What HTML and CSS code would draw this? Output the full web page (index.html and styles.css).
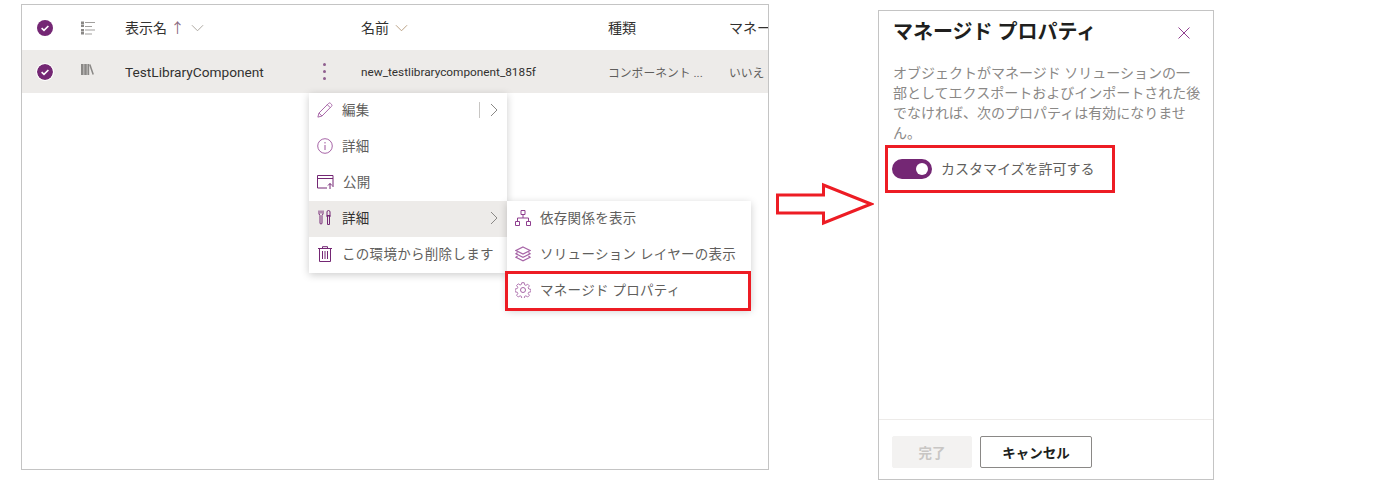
FILE: index.html
```html
<!DOCTYPE html>
<html lang="ja">
<head>
  <meta charset="UTF-8">
  <title>マネージド プロパティ</title>
  <link rel="stylesheet" href="styles.css">
</head>
<body>
  <div class="page">
    <div class="list-panel">
      <div class="row head-row">
        <svg class="check" viewBox="0 0 16 16"><circle cx="8" cy="8" r="8" fill="#742774"/><path d="M4.6 8.2l2.4 2.2 4.4-4.4" fill="none" stroke="#fff" stroke-width="1.6"/></svg>
        <svg class="type-icon" viewBox="0 0 14 14"><path d="M0 .5h3v2.500H0zM0 3.500h3v2.500H0zM0 8h3v2.500H0zM0 11h3v2.500H0z" fill="#8a8886"/><path d="M4 1.500h10M4 5.500h7M4 9h10M4 13h7" stroke="#a19f9d" fill="none"/></svg>
        <div class="cell">表示名 <span class="sort">↑</span>
          <svg class="chev" viewBox="0 0 14 8"><path d="M1 1l6 6 6-6" fill="none" stroke="#a8a29a"/></svg>
        </div>
        <div class="cell"></div>
        <div class="cell">名前
          <svg class="chev" viewBox="0 0 14 8"><path d="M1 1l6 6 6-6" fill="none" stroke="#b59b7c"/></svg>
        </div>
        <div class="cell">種類</div>
        <div class="cell">マネージド</div>
      </div>
      <div class="row item-row">
        <svg class="check ringed" viewBox="0 0 16 16"><circle cx="8" cy="8" r="8" fill="#742774"/><path d="M4.6 8.2l2.4 2.2 4.4-4.4" fill="none" stroke="#fff" stroke-width="1.6"/></svg>
        <svg class="type-icon lib" viewBox="0 0 13 11"><path d="M0 0h2.600v11H0zM3.200 0h2.600v11H3.200zM6.400 0h1.800v11H6.400z" fill="#8a8886"/><path d="M8.800 .5l3.400 10" stroke="#8a8886" stroke-width="1.500" fill="none"/></svg>
        <div class="cell title">TestLibraryComponent</div>
        <div class="kebab"><i></i><i></i><i></i></div>
        <div class="cell small">new_testlibrarycomponent_8185f</div>
        <div class="cell small muted">コンポーネント ...</div>
        <div class="cell small muted">いいえ</div>
      </div>

      <div class="menu">
        <div class="menu-item">
          <svg class="menu-icon" viewBox="0 0 18 18"><path d="M1 17l1.2-4.6L13 1.6a1.6 1.6 0 0 1 2.3 0l1 1a1.6 1.6 0 0 1 0 2.3L5.6 15.8zM2.2 12.4l3.4 3.4M11.6 3l3.4 3.4" fill="none" stroke="#a765a7" stroke-width="1.1"/></svg>
          <span class="menu-text">編集</span>
          <span class="split"></span>
          <svg class="menu-chev" viewBox="0 0 8 14"><path d="M1 1l6 6-6 6" fill="none" stroke="#8a8886"/></svg>
        </div>
        <div class="menu-item">
          <svg class="menu-icon" viewBox="0 0 16 16"><circle cx="8" cy="8" r="7.3" fill="none" stroke="#a765a7"/><path d="M8 7v5M8 4v1.4" fill="none" stroke="#a765a7" stroke-width="1.1"/></svg>
          <span class="menu-text">詳細</span>
        </div>
        <div class="menu-item">
          <svg class="menu-icon wide" viewBox="0 0 17 14"><path d="M10 13H.5V.5h15.500V12M.5 3.500h15.500" fill="none" stroke="#742774"/><path d="M13 14V8.500M11 10.500l2-2 2 2" fill="none" stroke="#742774"/></svg>
          <span class="menu-text">公開</span>
        </div>
        <div class="menu-item active">
          <svg class="menu-icon" viewBox="0 0 16 16"><path d="M4 .5v3M2 .5v3.500l1 1.500v7.500a1 1 0 0 0 2 0V5.500l1-1.500V.5" fill="none" stroke="#742774"/><path d="M11.500.5a1.500 1.500 0 0 0-1.500 1.500v3.500h3V2a1.500 1.500 0 0 0-1.500-1.500zM9 6h5M10.500 6v8.500h2V6" fill="none" stroke="#742774"/></svg>
          <span class="menu-text dark">詳細</span>
          <svg class="menu-chev" viewBox="0 0 8 14"><path d="M1 1l6 6-6 6" fill="none" stroke="#8a8886"/></svg>
          <div class="submenu">
            <div class="menu-item">
              <svg class="menu-icon" viewBox="0 0 16 16"><path d="M6 .5h4v4H6zM.5 11.500h4v4h-4zM11.500 11.500h4v4h-4zM8 4.500v3.500M2.500 11.500V8h11v3.500" fill="none" stroke="#8f3f8f"/></svg>
              <span class="menu-text">依存関係を表示</span>
            </div>
            <div class="menu-item">
              <svg class="menu-icon" viewBox="0 0 16 16"><path d="M8 1l7 3.500-7 3.500-7-3.500zM2.500 6.500L1 7.800l7 3.500 7-3.500-1.500-1.300M2.500 10L1 11.300l7 3.500 7-3.500L13.500 10" fill="none" stroke="#a765a7" stroke-width="1.200"/></svg>
              <span class="menu-text">ソリューション レイヤーの表示</span>
            </div>
            <div class="menu-item callout">
              <svg class="menu-icon" viewBox="0 0 16 16"><circle cx="8" cy="8" r="2.500" fill="none" stroke="#a765a7"/><path d="M6.800.7h2.400l.4 2.100 1.300.6 1.800-1.200 1.700 1.700-1.200 1.800.6 1.300 2.100.4v2.400l-2.100.4-.6 1.300 1.200 1.800-1.700 1.700-1.800-1.200-1.300.6-.4 2.100H6.800l-.4-2.100-1.300-.6-1.800 1.200-1.700-1.700 1.200-1.800-.6-1.300-2.100-.4V7l2.100-.4.600-1.300-1.200-1.800 1.700-1.700 1.800 1.200 1.300-.6z" fill="none" stroke="#a765a7" stroke-width=".9"/></svg>
              <span class="menu-text">マネージド プロパティ</span>
            </div>
          </div>
        </div>
        <div class="menu-item">
          <svg class="menu-icon" viewBox="0 0 16 16"><path d="M1 2.500h14M5.500 2.500V.7h5v1.800M2.500 2.500v13h11v-13M5.500 5v8M8 5v8M10.500 5v8" fill="none" stroke="#742774"/></svg>
          <span class="menu-text">この環境から削除します</span>
        </div>
      </div>
    </div>

    <svg class="flow-arrow" viewBox="0 0 98 44"><path d="M1.500 13H47.500V3L95 22 47.500 41V31H1.500z" fill="#fff" stroke="#ed1c24" stroke-width="3"/></svg>

    <div class="side-panel">
      <div class="side-body">
        <div class="side-head">
          <h2>マネージド プロパティ</h2>
          <svg class="close" viewBox="0 0 12 12"><path d="M.5.500l11 11M11.500.500l-11 11" fill="none" stroke="#8f3f8f"/></svg>
        </div>
        <p class="desc">オブジェクトがマネージド ソリューションの一<br>部としてエクスポートおよびインポートされた後<br>でなければ、次のプロパティは有効になりませ<br>ん。</p>
        <div class="toggle-row">
          <span class="toggle"><i></i></span>
          <span class="toggle-label">カスタマイズを許可する</span>
        </div>
      </div>
      <div class="side-foot">
        <button class="btn btn-off">完了</button>
        <button class="btn">キャンセル</button>
      </div>
    </div>
  </div>
</body>
</html>
```

FILE: styles.css
```css
* {
  box-sizing: border-box;
}
body {
  margin: 0;
  background-color: #fff;
  font-family: Roboto, "Noto Sans CJK JP", sans-serif;
  color: #323130;
  overflow: hidden;
}
.page {
  display: flex;
  align-items: flex-start;
  height: 485px;
  padding: 4px 0 0 21px;
}

/* list */
.list-panel {
  position: relative;
  width: 748px;
  height: 466px;
  border: 1px solid #c4c4c4;
  overflow: hidden;
  flex: none;
}
.row {
  display: grid;
  grid-template-columns: 59px 44px 177px 59px 247px 121px 100px;
  align-items: center;
}
.head-row {
  height: 45px;
  font-size: 14px;
}
.head-row .cell {
  padding-bottom: 1px;
}
.item-row {
  height: 43px;
  background-color: #edebe9;
}
.check {
  width: 16px;
  height: 16px;
  margin-left: 15px;
}
.check.ringed {
  border-radius: 50%;
  box-shadow: 0 0 0 1px #fff;
}
.type-icon {
  width: 14px;
  height: 14px;
}
.type-icon.lib {
  width: 13px;
  height: 11px;
  margin-top: -4px;
}
.cell {
  white-space: nowrap;
  color: #323130;
}
.sort {
  color: #8a6a80;
}
.chev {
  width: 13px;
  height: 8px;
  margin-left: 3px;
  vertical-align: 1px;
}
.title {
  font-size: 13.700px;
}
.small {
  font-size: 11.800px;
}
.muted {
  color: #605e5c;
}
.kebab {
  display: flex;
  flex-direction: column;
  gap: 4px;
  width: 3px;
  margin-left: 21px;
}
.kebab i {
  width: 3px;
  height: 3px;
  border-radius: 50%;
  background-color: #8f5f8f;
}

/* menus */
.menu {
  position: absolute;
  left: 287px;
  top: 88px;
  width: 198px;
  background-color: #fff;
  box-shadow: 0 2px 8px rgba(0, 0, 0, 0.2);
}
.menu-item {
  position: relative;
  display: flex;
  align-items: center;
  height: 36px;
  padding: 0 9px 2px 8px;
  font-size: 13.500px;
  white-space: nowrap;
}
.menu-item.active {
  background-color: #edebe9;
}
.menu-icon {
  width: 16px;
  height: 16px;
  flex: none;
}
.menu-icon.wide {
  width: 17px;
  height: 14px;
}
.menu-text {
  margin-left: 9px;
  padding-bottom: 2px;
  flex: 1;
  color: #605e5c;
  letter-spacing: 0.3px;
}
.menu-text.dark {
  color: #323130;
}
.split {
  width: 1px;
  height: 16px;
  margin-right: 10px;
  background-color: #c8c6c4;
}
.menu-chev {
  width: 8px;
  height: 14px;
  flex: none;
}
.submenu {
  position: absolute;
  left: 100%;
  top: 0;
  width: 244px;
  background-color: #fff;
  box-shadow: 0 2px 8px rgba(0, 0, 0, 0.2);
}
.callout::after {
  content: "";
  position: absolute;
  left: -2px;
  right: 0;
  top: -2px;
  bottom: -2px;
  border: 3px solid #ed1c24;
}

.flow-arrow {
  width: 98px;
  height: 44px;
  margin: 178px 0 0 7px;
  flex: none;
}

/* side panel */
.side-panel {
  display: flex;
  flex-direction: column;
  width: 336px;
  height: 470px;
  margin: 6px 0 0 4px;
  border: 1px solid #c4c4c4;
  flex: none;
}
.side-body {
  flex: 1;
  padding: 4px 13px 0 14px;
}
.side-head {
  display: flex;
  align-items: center;
  justify-content: space-between;
  padding-right: 10px;
  height: 30px;
}
.side-head h2 {
  margin: 0;
  font-size: 20px;
  font-weight: 700;
  color: #201f1e;
}
.close {
  width: 12px;
  height: 12px;
  margin-top: 6px;
}
.desc {
  margin: 18px 0 0;
  font-size: 14px;
  line-height: 20px;
  color: #8a8886;
  white-space: nowrap;
}
.toggle-row {
  display: flex;
  align-items: center;
  width: 230px;
  height: 48px;
  margin: 2px 0 0 -8px;
  padding-left: 4px;
  border: 3px solid #ed1c24;
}
.toggle {
  display: flex;
  align-items: center;
  justify-content: flex-end;
  width: 40px;
  height: 20px;
  padding-right: 4px;
  border-radius: 10px;
  background-color: #742774;
  flex: none;
}
.toggle i {
  width: 12px;
  height: 12px;
  border-radius: 50%;
  background-color: #fff;
}
.toggle-label {
  margin-left: 9px;
  padding-bottom: 2px;
  font-size: 14px;
  color: #605e5c;
}
.side-foot {
  display: flex;
  gap: 8px;
  height: 60px;
  padding: 16px 0 0 13px;
  border-top: 1px solid #edebe9;
}
.btn {
  width: 112px;
  height: 32px;
  border: 1px solid #8a8886;
  border-radius: 2px;
  background-color: #fff;
  color: #201f1e;
  font-family: inherit;
  font-size: 13.500px;
  font-weight: 700;
}
.btn-off {
  width: 80px;
  border-color: #f3f2f1;
  background-color: #f3f2f1;
  color: #c8c6c4;
}
```
